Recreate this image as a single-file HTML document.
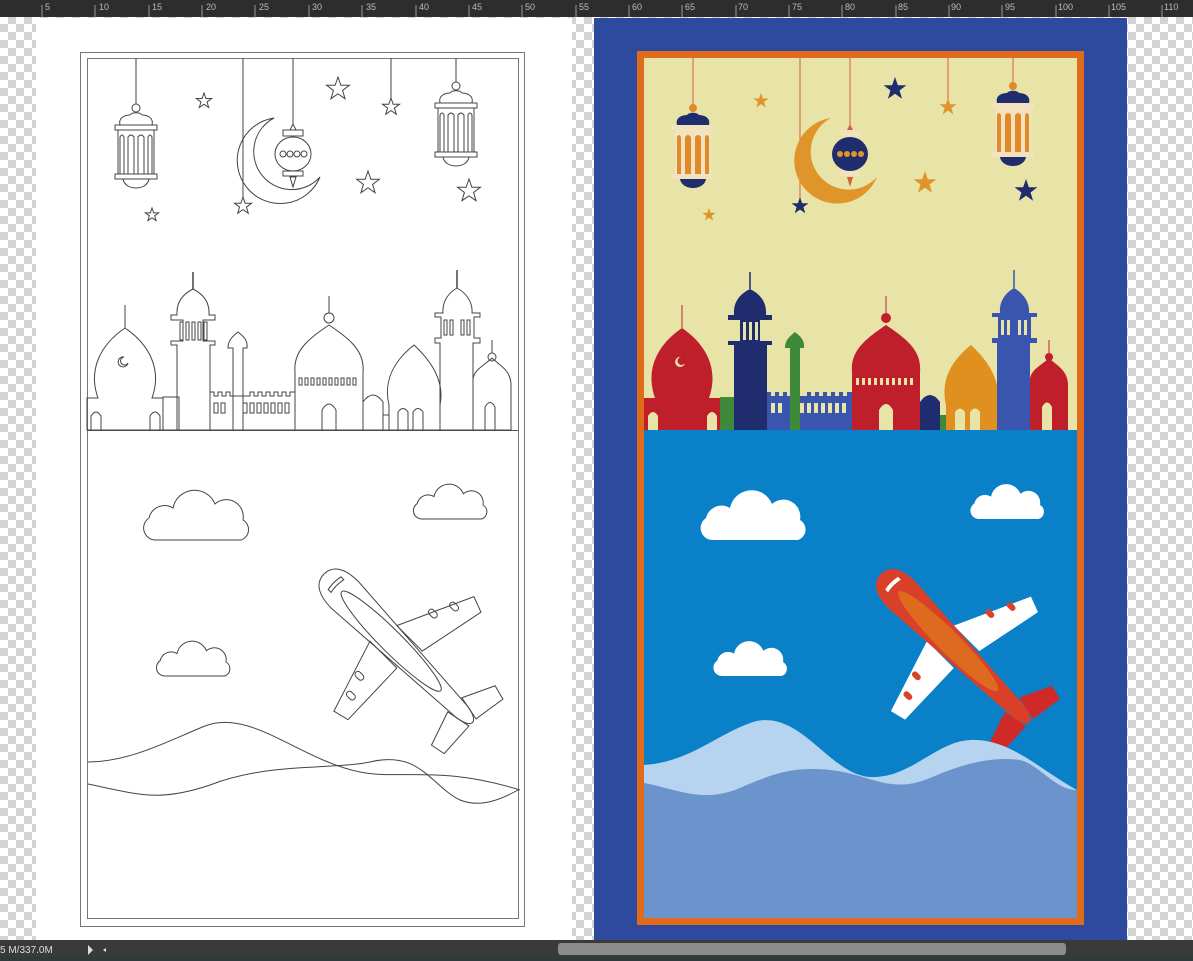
<!DOCTYPE html>
<html><head><meta charset="utf-8"><style>
html,body{margin:0;padding:0;width:1193px;height:961px;overflow:hidden;background:#fff}
.chk{position:absolute;left:0;top:0;width:1193px;height:961px;
background-color:#fff;background-image:conic-gradient(#d4d4d4 25%,#fff 0 50%,#d4d4d4 0 75%,#fff 0);background-size:16px 16px}
svg{position:absolute;left:0;top:0}
</style></head><body>
<div class="chk"></div>
<svg width="1193" height="961" viewBox="0 0 1193 961" xmlns="http://www.w3.org/2000/svg">
<defs>
 <path id="star" d="M0,-1 L.24,-.31 .95,-.31 .38,.12 .59,.81 0,.4 -.59,.81 -.38,.12 -.95,-.31 -.24,-.31Z" vector-effect="non-scaling-stroke"/>
 <g id="lantern">
  <circle cx="0" cy="-19" r="4" style="fill:var(--m,#e08a2a)"/>
  <path d="M-16,-2 C-18,-10 -10,-12 -6,-12 C-4,-15 4,-15 6,-12 C10,-12 18,-10 16,-2Z" style="fill:var(--m,#1f2d6e)"/>
  <rect x="-21" y="-2" width="42" height="5" style="fill:var(--m,#f3e2c0)"/>
  <rect x="-18" y="3" width="36" height="44" style="fill:var(--m,#f3e2c0)"/>
  <path d="M-16,47 V10 Q-14,6 -12,10 V47Z M-8,47 V10 Q-5,6 -2,10 V47Z M2,47 V10 Q5,6 8,10 V47Z M12,47 V10 Q14,6 16,10 V47Z" style="fill:var(--m,#e08a2a)"/>
  <rect x="-21" y="47" width="42" height="5" style="fill:var(--m,#f3e2c0)"/>
  <path d="M-13,52 H13 C12,58 6,61 0,61 C-6,61 -12,58 -13,52Z" style="fill:var(--m,#1f2d6e)"/>
 </g>
 <path id="cloud" d="M12,60 A12,12 0 0 1 6,38 A16,16 0 0 1 30,28 A22,22 0 0 1 72,24 A17,17 0 0 1 100,40 A11,11 0 0 1 98,60 Z" vector-effect="non-scaling-stroke"/>
 <g id="art" style="stroke:var(--s,none);stroke-width:1">
  <g style="stroke:var(--sl,#d5603a)">
   <line x1="243" y1="58" x2="243" y2="198"/>
   <line x1="293" y1="58" x2="293" y2="125"/>
   <line x1="391" y1="58" x2="391" y2="100"/>
   <line x1="136" y1="58" x2="136" y2="104"/>
   <line x1="456" y1="58" x2="456" y2="82"/>
  </g>
  <path d="M274,118 A43,43 0 1 0 320,177 A38,38 0 1 1 274,118Z" style="fill:var(--m,#e0952a)"/>
  <use href="#lantern" transform="translate(136,127)"/>
  <use href="#lantern" transform="translate(456,105)"/>
  <path d="M293,124 L290,130 H296Z" style="fill:var(--m,#d5603a)"/>
  <rect x="283" y="130" width="20" height="6" style="fill:var(--m,#f3e2c0)"/>
  <ellipse cx="293" cy="154" rx="18" ry="17" style="fill:var(--m,#1f2d6e)"/>
  <g style="fill:var(--m,#e0952a)"><circle cx="283" cy="154" r="3"/><circle cx="290" cy="154" r="3"/><circle cx="297" cy="154" r="3"/><circle cx="304" cy="154" r="3"/></g>
  <rect x="283" y="171" width="20" height="5" style="fill:var(--m,#f3e2c0)"/>
  <path d="M290,177 H296 L293,187Z" style="fill:var(--m,#d5603a)"/>
  <g>
   <use href="#star" transform="translate(204,101) scale(8)" style="fill:var(--m,#e0952a)"/>
   <use href="#star" transform="translate(338,89) scale(12)" style="fill:var(--m,#1f2d6e)"/>
   <use href="#star" transform="translate(391,107) scale(9)" style="fill:var(--m,#e0952a)"/>
   <use href="#star" transform="translate(368,183) scale(12)" style="fill:var(--m,#e0952a)"/>
   <use href="#star" transform="translate(469,191) scale(12)" style="fill:var(--m,#1f2d6e)"/>
   <use href="#star" transform="translate(243,206) scale(9)" style="fill:var(--m,#1f2d6e)"/>
   <use href="#star" transform="translate(152,215) scale(7)" style="fill:var(--m,#e0952a)"/>
  </g>
  <rect x="163" y="397" width="16" height="33" style="fill:var(--m,#3f8a3a)"/>
  <path d="M87,430 V398 H98 C88,370 100,345 125,328 C150,345 162,370 152,398 H163 V430Z" style="fill:var(--m,#bf1f2a)"/>
  <line x1="125" y1="328" x2="125" y2="305" style="stroke:var(--s,#bf1f2a)"/>
  <path d="M210,430 V392 H214 V396 H218 V392 H222 V396 H226 V392 H230 V396 H250 V392 H254 V396 H258 V392 H262 V396 H266 V392 H270 V396 H274 V392 H278 V396 H282 V392 H286 V396 H290 V392 H295 V430Z" style="fill:var(--m,#3a55ad)"/>
  <g style="fill:var(--m,#e8e4a8)"><rect x="214" y="403" width="4" height="10"/><rect x="221" y="403" width="4" height="10"/><rect x="243" y="403" width="4" height="10"/><rect x="250" y="403" width="4" height="10"/><rect x="257" y="403" width="4" height="10"/><rect x="264" y="403" width="4" height="10"/><rect x="271" y="403" width="4" height="10"/><rect x="278" y="403" width="4" height="10"/><rect x="285" y="403" width="4" height="10"/></g>
  <path d="M177,430 V345 H171 V341 H183 V320 H171 V315 H177 C176,300 185,293 193,289 C201,293 210,300 209,315 H215 V320 H203 V341 H215 V345 H210 V430Z" style="fill:var(--m,#1f2d6e)"/>
  <line x1="193" y1="289" x2="193" y2="272" style="stroke:var(--s,#1f2d6e);stroke-width:1.5"/>
  <g style="fill:var(--m,#e8e4a8)"><rect x="180" y="322" width="3" height="18"/><rect x="186" y="322" width="3" height="18"/><rect x="192" y="322" width="3" height="18"/><rect x="198" y="322" width="3" height="18"/><rect x="204" y="322" width="3" height="18"/></g>
  <path d="M233,430 V348 H228 C228,340 233,336 238,332 C243,336 248,340 247,348 H243 V430Z" style="fill:var(--m,#3f8a3a)"/>
  <path d="M295,430 V372 C293,350 310,338 329,325 C348,338 365,350 363,372 V430Z" style="fill:var(--m,#bf1f2a)"/>
  <circle cx="329" cy="318" r="5" style="fill:var(--m,#bf1f2a)"/>
  <line x1="329" y1="313" x2="329" y2="296" style="stroke:var(--s,#bf1f2a)"/>
  <g style="fill:var(--m,#e8e4a8)"><rect x="299" y="378" width="3" height="7"/><rect x="305" y="378" width="3" height="7"/><rect x="311" y="378" width="3" height="7"/><rect x="317" y="378" width="3" height="7"/><rect x="323" y="378" width="3" height="7"/><rect x="329" y="378" width="3" height="7"/><rect x="335" y="378" width="3" height="7"/><rect x="341" y="378" width="3" height="7"/><rect x="347" y="378" width="3" height="7"/><rect x="353" y="378" width="3" height="7"/></g>
  <path d="M322,430 V410 Q329,398 336,410 V430Z" style="fill:var(--m,#e8e4a8)"/>
  <path d="M363,430 V402 Q373,388 383,402 V430Z" style="fill:var(--m,#1f2d6e)"/>
  <rect x="383" y="415" width="6" height="15" style="fill:var(--m,#3f8a3a)"/>
  <path d="M389,430 V405 C383,380 395,360 414,345 C430,360 445,380 440,405 V430Z" style="fill:var(--m,#e0901e)"/>
  <g style="fill:var(--m,#e8e4a8)"><path d="M398,430 V412 Q403,405 408,412 V430Z"/><path d="M413,430 V412 Q418,405 423,412 V430Z"/></g>
  <path d="M440,430 V343 H435 V338 H441 V317 H435 V313 H443 C442,300 450,292 457,288 C464,292 473,300 472,313 H480 V317 H474 V338 H480 V343 H473 V430Z" style="fill:var(--m,#3a55ad)"/>
  <line x1="457" y1="288" x2="457" y2="270" style="stroke:var(--s,#3a55ad);stroke-width:1.5"/>
  <g style="fill:var(--m,#e8e4a8)"><rect x="444" y="320" width="3" height="15"/><rect x="450" y="320" width="3" height="15"/><rect x="461" y="320" width="3" height="15"/><rect x="467" y="320" width="3" height="15"/></g>
  <path d="M473,430 V380 C473,370 485,365 492,358 C499,365 511,370 511,385 V430Z" style="fill:var(--m,#bf1f2a)"/>
  <circle cx="492" cy="357" r="4" style="fill:var(--m,#bf1f2a)"/>
  <line x1="492" y1="353" x2="492" y2="340" style="stroke:var(--s,#bf1f2a)"/>
  <g style="fill:var(--m,#e8e4a8)">
   <path d="M485,430 V407 Q490,398 495,407 V430Z"/>
   <path d="M91,430 V416 Q96,408 101,416 V430Z"/>
   <path d="M150,430 V416 Q155,408 160,416 V430Z"/>
   <path d="M124,357 A5,5 0 1 0 128,363 A4,4 0 1 1 124,357Z"/>
  </g>
  <use href="#cloud" transform="translate(143,480)" style="fill:var(--m,#fff)"/>
  <use href="#cloud" transform="translate(413,477) scale(0.7)" style="fill:var(--m,#fff)"/>
  <use href="#cloud" transform="translate(156,634) scale(0.7)" style="fill:var(--m,#fff)"/>
  <g transform="translate(324,574) rotate(45)">
   <path d="M88,-15 L122,-90 L138,-84 L124,-15Z" style="fill:var(--m,#fff)"/>
   <path d="M80,15 L104,90 L120,86 L118,15Z" style="fill:var(--m,#fff)"/>
   <path d="M185,-10 L200,-42 L215,-38 L210,-5Z" style="fill:var(--m,#cf2a28)"/>
   <path d="M185,10 L197,45 L212,42 L210,5Z" style="fill:var(--m,#cf2a28)"/>
   <g style="fill:var(--m,#d94428)"><rect x="100" y="-52" width="10" height="6" rx="3"/><rect x="110" y="-72" width="10" height="6" rx="3"/><rect x="92" y="44" width="10" height="6" rx="3"/><rect x="100" y="64" width="10" height="6" rx="3"/></g>
   <path d="M0,0 C0,-12 10,-19 30,-19 L195,-8 C215,-5 215,5 195,8 L30,19 C10,19 0,12 0,0Z" style="fill:var(--m,#d9402a)"/>
   <ellipse cx="95" cy="0" rx="70" ry="11" style="fill:var(--m,#dd6a1e)"/>
   <path d="M14,-10 Q12,0 14,8 L18,8 Q16,0 18,-10Z" style="fill:var(--m,#fff)"/>
  </g>
 </g>
</defs>

<rect x="0" y="0" width="1193" height="17" fill="#2d2d2d"/>
<g fill="#bbb" font-family="Liberation Sans, sans-serif" font-size="9">
<text x="45" y="10">5</text><text x="99" y="10">10</text><text x="152" y="10">15</text><text x="206" y="10">20</text><text x="259" y="10">25</text><text x="312" y="10">30</text><text x="366" y="10">35</text><text x="419" y="10">40</text><text x="472" y="10">45</text><text x="525" y="10">50</text><text x="579" y="10">55</text><text x="632" y="10">60</text><text x="685" y="10">65</text><text x="738" y="10">70</text><text x="792" y="10">75</text><text x="845" y="10">80</text><text x="898" y="10">85</text><text x="951" y="10">90</text><text x="1005" y="10">95</text><text x="1058" y="10">100</text><text x="1111" y="10">105</text><text x="1164" y="10">110</text>
</g>
<g stroke="#999" stroke-width="1">
<path d="M42,5 V17 M95,5 V17 M149,5 V17 M202,5 V17 M255,5 V17 M309,5 V17 M362,5 V17 M416,5 V17 M469,5 V17 M522,5 V17 M576,5 V17 M629,5 V17 M682,5 V17 M736,5 V17 M789,5 V17 M842,5 V17 M896,5 V17 M949,5 V17 M1002,5 V17 M1056,5 V17 M1109,5 V17 M1162,5 V17"/>
</g>

<rect x="36" y="18" width="536" height="922" fill="#fff"/>
<rect x="80.5" y="52.5" width="444" height="874" fill="none" stroke="#777"/>
<rect x="87.5" y="58.5" width="431" height="860" fill="none" stroke="#777"/>
<line x1="87" y1="430.5" x2="518" y2="430.5" stroke="#555"/>
<use href="#art" style="--m:none;--s:#444;--sl:#444"/>
<path d="M88,762 C130,762 170,740 205,726 C250,708 300,760 360,772 C400,780 440,765 520,790" fill="none" stroke="#444"/>
<path d="M88,784 C140,795 160,802 210,785 C270,762 330,770 370,762 C420,750 430,785 460,800 C480,808 500,800 518,790" fill="none" stroke="#444"/>

<rect x="594" y="18" width="533" height="922" fill="#2d4a9e"/>
<rect x="637" y="51" width="447" height="874" fill="#e06b1c"/>
<rect x="644" y="58" width="433" height="372" fill="#e8e4a8"/>
<rect x="644" y="430" width="433" height="488" fill="#0a80c8"/>
<g transform="translate(557,0)"><use href="#art"/></g>
<path d="M644,765 C690,762 715,735 753,722 C800,708 830,775 870,777 C910,779 935,742 970,740 C1010,738 1040,770 1077,790 V918 H644Z" fill="#b6d4ef"/>
<path d="M644,783 C680,790 700,802 735,790 C770,775 790,766 830,770 C870,774 890,795 930,778 C960,765 990,756 1020,760 C1040,765 1055,790 1077,790 V918 H644Z" fill="#6b93cc"/>

<rect x="0" y="940" width="1193" height="21" fill="#3a3a3a"/>
<rect x="0" y="957" width="1193" height="4" fill="#2f3a3d"/>
<text x="0" y="953" fill="#ddd" font-family="Liberation Sans, sans-serif" font-size="10">5 M/337.0M</text>
<path d="M88,945 L93,950 L88,955Z" fill="#ddd"/>
<path d="M106,948 L103,950 L106,952Z" fill="#ddd"/>
<rect x="558" y="943" width="508" height="12" rx="3" fill="#8c8c8c"/>
</svg>
</body></html>
